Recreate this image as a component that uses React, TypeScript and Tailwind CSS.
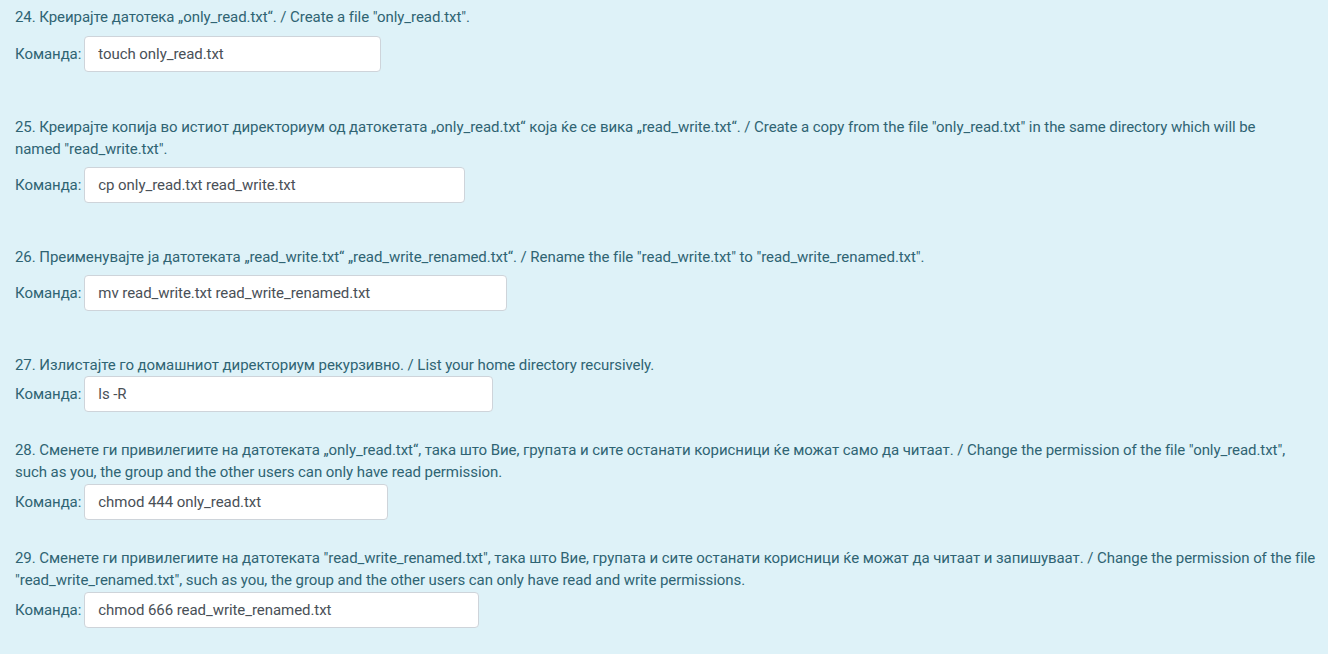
import React from 'react';

type Item = {
    lines: string[];
    answer: string;
    width: string;
    top: string;
    gap: string;
};

const items: Item[] = [
    {
        lines: ['24. Креирајте датотека „only_read.txt“. / Create a file "only_read.txt".'],
        answer: 'touch only_read.txt',
        width: 'w-[297px]',
        top: 'mt-0',
        gap: 'mt-[8px]',
    },
    {
        lines: [
            '25. Креирајте копија во истиот директориум од датокетата „only_read.txt“ која ќе се вика „read_write.txt“. / Create a copy from the file "only_read.txt" in the same directory which will be',
            'named "read_write.txt".',
        ],
        answer: 'cp only_read.txt read_write.txt',
        width: 'w-[381px]',
        top: 'mt-[44px]',
        gap: 'mt-[7px]',
    },
    {
        lines: ['26. Преименувајте ја датотеката „read_write.txt“ „read_write_renamed.txt“. / Rename the file "read_write.txt" to "read_write_renamed.txt".'],
        answer: 'mv read_write.txt read_write_renamed.txt',
        width: 'w-[423px]',
        top: 'mt-[43px]',
        gap: 'mt-[7px]',
    },
    {
        lines: ['27. Излистајте го домашниот директориум рекурзивно. / List your home directory recursively.'],
        answer: 'ls -R',
        width: 'w-[409px]',
        top: 'mt-[43px]',
        gap: 'mt-0',
    },
    {
        lines: [
            '28. Сменете ги привилегиите на датотеката „only_read.txt“, така што Вие, групата и сите останати корисници ќе можат само да читаат. / Change the permission of the file "only_read.txt",',
            'such as you, the group and the other users can only have read permission.',
        ],
        answer: 'chmod 444 only_read.txt',
        width: 'w-[304px]',
        top: 'mt-[27px]',
        gap: 'mt-[1px]',
    },
    {
        lines: [
            '29. Сменете ги привилегиите на датотеката "read_write_renamed.txt", така што Вие, групата и сите останати корисници ќе можат да читаат и запишуваат. / Change the permission of the file',
            '"read_write_renamed.txt", such as you, the group and the other users can only have read and write permissions.',
        ],
        answer: 'chmod 666 read_write_renamed.txt',
        width: 'w-[395px]',
        top: 'mt-[27px]',
        gap: 'mt-[1px]',
    },
];

export default function App() {
    return (
        <div
            className="min-h-screen bg-[#def2f8] px-[15px] pt-[6px] pb-8 text-[15px] leading-[22px] tracking-[-0.06px] text-[#2f6473]"
            style={{ fontFamily: 'Roboto, "Noto Sans", sans-serif' }}
        >
            {items.map((item) => (
                <div key={item.answer} className={item.top}>
                    <p className="whitespace-nowrap">
                        {item.lines.map((line, i) => (
                            <React.Fragment key={i}>
                                {i > 0 && <br />}
                                {line}
                            </React.Fragment>
                        ))}
                    </p>
                    <div className={`flex items-center ${item.gap}`}>
                        <label className="mr-[3px]">Команда:</label>
                        <input
                            type="text"
                            defaultValue={item.answer}
                            readOnly
                            className={`${item.width} h-[36px] rounded-[4px] border border-[#ced4da] bg-white px-[13px] text-[15px] tracking-[-0.06px] text-[#495057] outline-none`}
                        />
                    </div>
                </div>
            ))}
        </div>
    );
}
